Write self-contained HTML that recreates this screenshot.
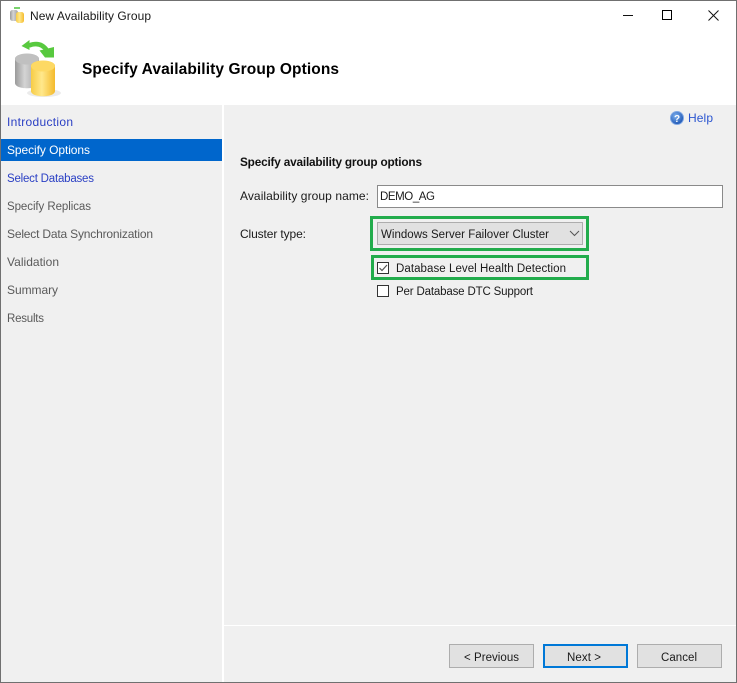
<!DOCTYPE html>
<html><head><meta charset="utf-8"><style>
html,body{margin:0;padding:0;background:#f0f0f0}
svg{display:block}
text{font-family:"Liberation Sans",sans-serif;font-size:12px;fill:#1a1a1a}
.l{fill:#2a3fc4}.g{fill:#5a5a5a}
.s{font-size:11.500px}
</style></head><body>
<svg width="737" height="683" viewBox="0 0 737 683" xmlns="http://www.w3.org/2000/svg">
<defs>
<linearGradient id="gy" x1="0" x2="1" y1="0" y2="0"><stop offset="0" stop-color="#9a9a9a"/><stop offset=".4" stop-color="#d4d4d4"/><stop offset="1" stop-color="#a0a0a0"/></linearGradient>
<linearGradient id="ye" x1="0" x2="1" y1="0" y2="0"><stop offset="0" stop-color="#f7cc45"/><stop offset=".45" stop-color="#ffe88c"/><stop offset="1" stop-color="#f4ba2c"/></linearGradient>
<radialGradient id="hp" cx=".4" cy=".35" r=".7"><stop offset="0" stop-color="#7fb2ee"/><stop offset="1" stop-color="#174fb0"/></radialGradient>
</defs>
<rect width="737" height="683" fill="#f0f0f0"/>
<rect x="0" y="0" width="737" height="105" fill="#fff"/>
<rect x="222" y="105" width="2" height="578" fill="#fff"/>
<rect x="224" y="625" width="513" height="1" fill="#fff"/>
<rect x="0.500" y="0.500" width="736" height="682" fill="none" stroke="#707070"/>

<!-- small title icon -->
<path d="M14 8h6" fill="none" stroke="#4cc23a" stroke-width="1.500"/>
<rect x="10" y="10" width="8" height="11" rx="2.500" fill="url(#gy)"/>
<rect x="16" y="12" width="8" height="11" rx="2.500" fill="url(#ye)"/>
<text x="30" y="20" textLength="121" lengthAdjust="spacing">New Availability Group</text>

<!-- window controls -->
<rect x="623" y="15" width="10" height="1" fill="#111"/>
<rect x="662.500" y="10.500" width="9" height="9" fill="none" stroke="#000"/>
<path d="M708.500 10.500l10 10M718.500 10.500l-10 10" stroke="#111" fill="none"/>

<!-- header icon -->
<ellipse cx="44" cy="93" rx="17" ry="4" fill="#e2e2e2" opacity=".7"/>
<path d="M15 59c0-7 24-7 24 0v24c0 7-24 7-24 0z" fill="url(#gy)"/>
<ellipse cx="27" cy="59" rx="12" ry="5.500" fill="#c0c0c0"/>
<path d="M31 66c0-7 24-7 24 0v25c0 7-24 7-24 0z" fill="url(#ye)"/>
<ellipse cx="43" cy="66" rx="12" ry="5.500" fill="#fdd964"/>
<path d="M29 45.500c8-3 14-1 18 5" fill="none" stroke="#58c93f" stroke-width="4.500"/>
<path d="M21.500 46l8-6v10z" fill="#58c93f"/>
<path d="M39.500 50.500l14.500-3.500v10.500h-9z" fill="#58c93f"/>

<text x="82" y="74" style="font-size:15.500px;font-weight:bold;fill:#000" textLength="257" lengthAdjust="spacing">Specify Availability Group Options</text>

<!-- left nav -->
<rect x="1" y="139" width="221" height="22" fill="#0066cc"/>
<text class="l" x="7" y="126" textLength="66" lengthAdjust="spacing">Introduction</text>
<text x="7" y="154" style="fill:#fff" textLength="83" lengthAdjust="spacing">Specify Options</text>
<text class="l s" x="7" y="182" textLength="87" lengthAdjust="spacing">Select Databases</text>
<text class="g s" x="7" y="210" textLength="84" lengthAdjust="spacing">Specify Replicas</text>
<text class="g" x="7" y="238" textLength="146" lengthAdjust="spacing">Select Data Synchronization</text>
<text class="g" x="7" y="266" textLength="52" lengthAdjust="spacing">Validation</text>
<text class="g" x="7" y="294" textLength="51" lengthAdjust="spacing">Summary</text>
<text class="g s" x="7" y="322" textLength="37" lengthAdjust="spacing">Results</text>

<!-- help -->
<circle cx="677" cy="118" r="6.500" fill="url(#hp)" stroke="#7fa8e4"/>
<text x="677" y="122" text-anchor="middle" style="font-size:10px;font-weight:bold;fill:#fff">?</text>
<text x="688" y="122" style="fill:#2a55d0" textLength="25" lengthAdjust="spacing">Help</text>

<!-- content -->
<text x="240" y="166" style="font-size:11.800px;font-weight:bold;fill:#111" textLength="182" lengthAdjust="spacing">Specify availability group options</text>
<text x="240" y="200" textLength="129" lengthAdjust="spacing">Availability group name:</text>
<rect x="377.500" y="185.500" width="345" height="22" fill="#fff" stroke="#8a8a8a"/>
<text class="s" x="380" y="200" textLength="55" lengthAdjust="spacing">DEMO_AG</text>
<text x="240" y="238" textLength="66" lengthAdjust="spacing">Cluster type:</text>

<rect x="371.500" y="217.500" width="216" height="32" fill="none" stroke="#22ac4c" stroke-width="3"/>
<rect x="377.500" y="222.500" width="205" height="22" fill="#e1e1e1" stroke="#adadad"/>
<text class="s" x="381" y="238" textLength="168" lengthAdjust="spacing">Windows Server Failover Cluster</text>
<path d="M570 231l4.500 4.500 4.500-4.500" fill="none" stroke="#555"/>

<rect x="372.500" y="256.500" width="215" height="22" fill="none" stroke="#22ac4c" stroke-width="3"/>
<rect x="377.500" y="262.500" width="11" height="11" fill="#fff" stroke="#333"/>
<path d="M379.500 268l2.500 2.500 5-5.500" fill="none" stroke="#555" stroke-width="1.200"/>
<text class="s" x="396" y="272" textLength="170" lengthAdjust="spacing">Database Level Health Detection</text>
<rect x="377.500" y="285.500" width="11" height="11" fill="#fff" stroke="#333"/>
<text class="s" x="396" y="295" textLength="137" lengthAdjust="spacing">Per Database DTC Support</text>

<!-- buttons -->
<rect x="449.500" y="644.500" width="84" height="23" fill="#e1e1e1" stroke="#adadad"/>
<text class="s" x="464" y="661" textLength="55" lengthAdjust="spacing">&lt; Previous</text>
<rect x="544" y="645" width="83" height="22" fill="#e1e1e1" stroke="#0078d7" stroke-width="2"/>
<text class="s" x="567" y="661" textLength="34" lengthAdjust="spacing">Next &gt;</text>
<rect x="637.500" y="644.500" width="84" height="23" fill="#e1e1e1" stroke="#adadad"/>
<text class="s" x="661" y="661" textLength="36" lengthAdjust="spacing">Cancel</text>
</svg>
</body></html>
